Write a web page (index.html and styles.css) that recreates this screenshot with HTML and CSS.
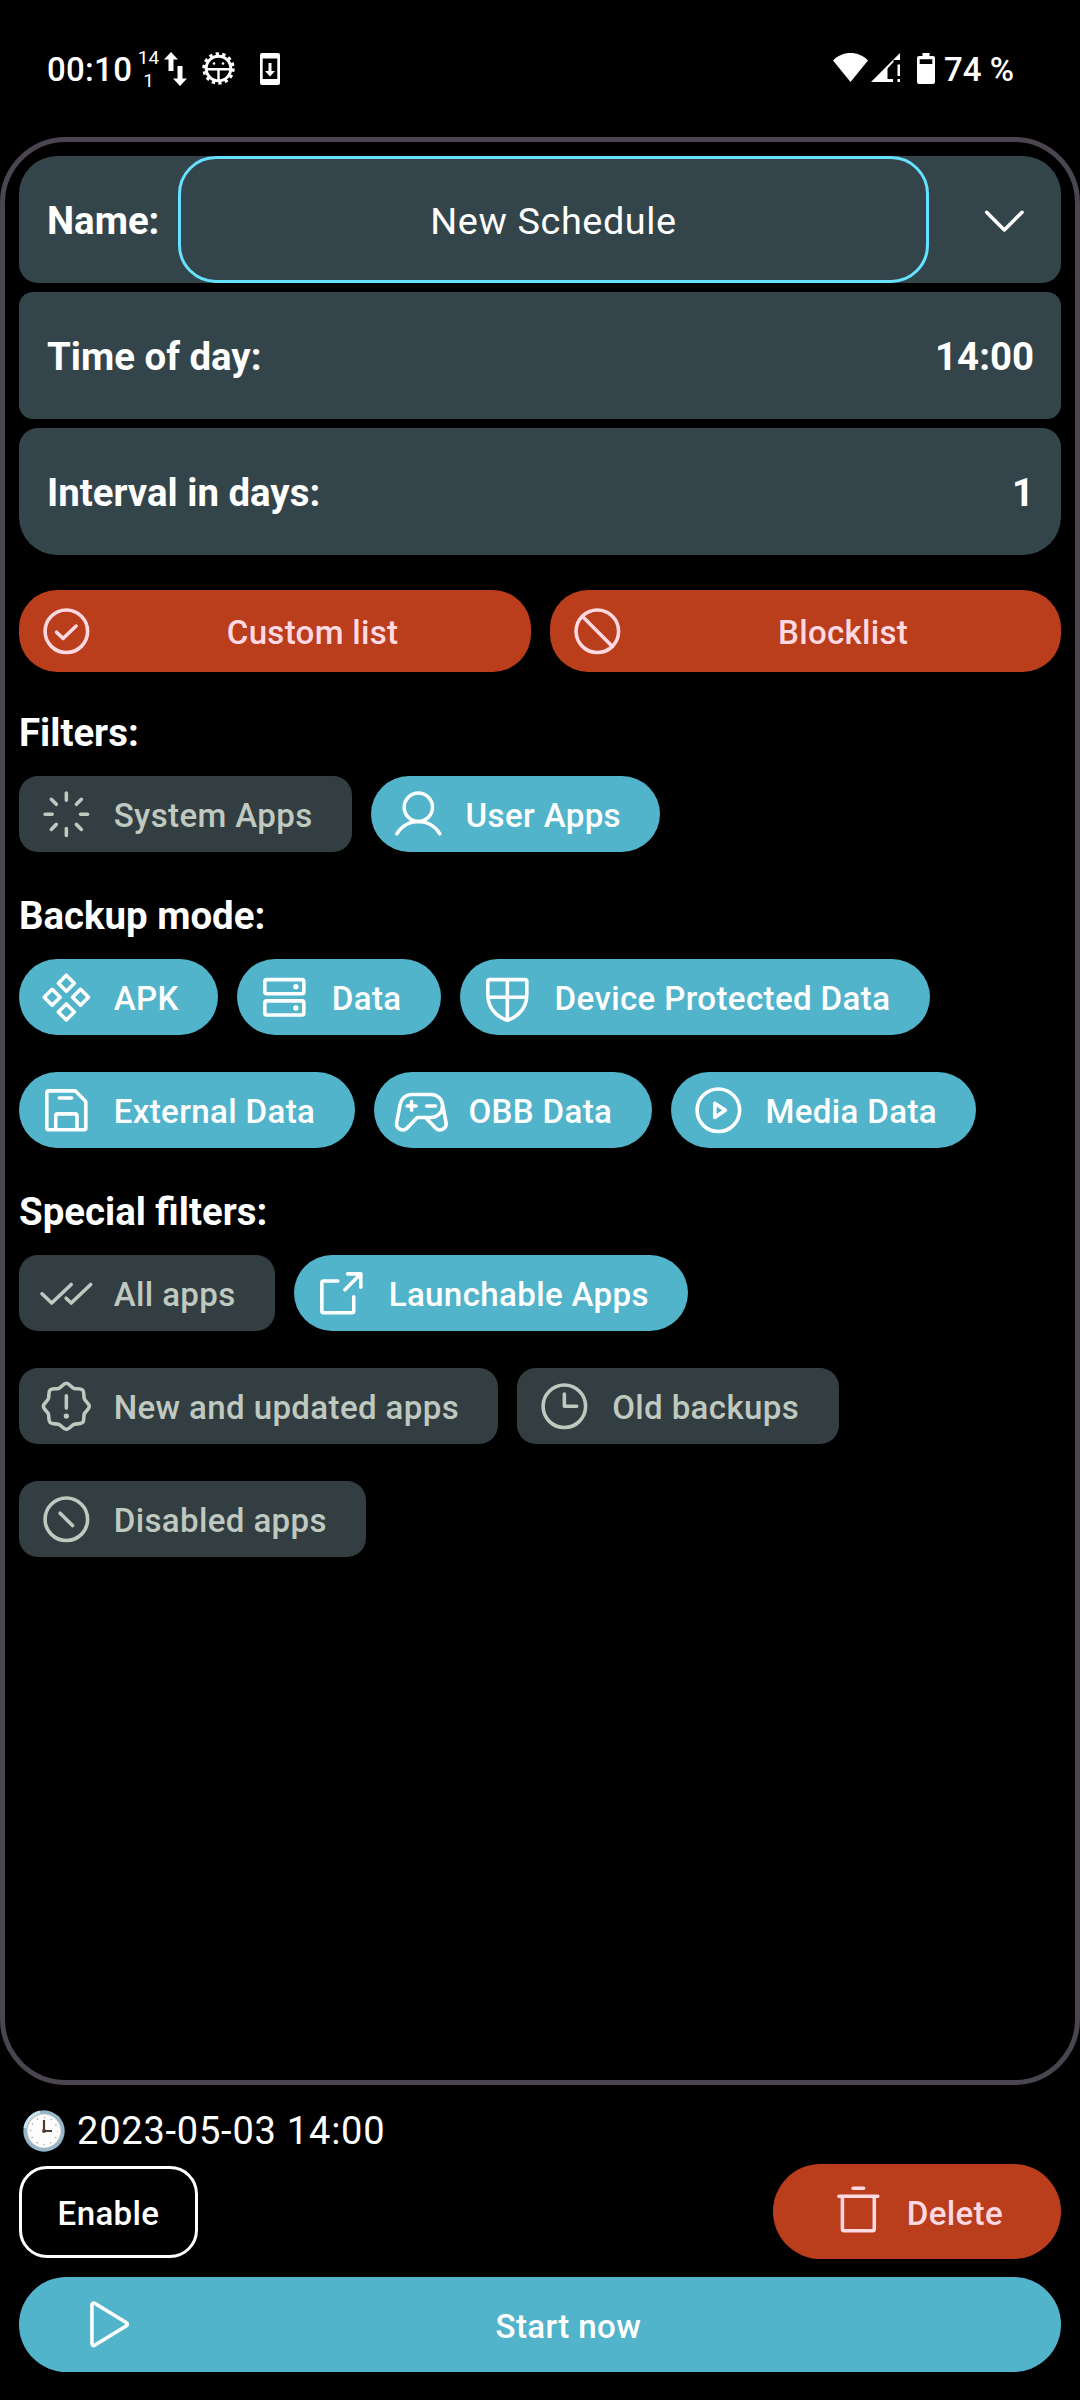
FILE: index.html
```html
<!DOCTYPE html>
<html lang="en">
<head>
<meta charset="utf-8">
<title>Schedule</title>
<link rel="stylesheet" href="styles.css">
</head>
<body>
<div class="screen">
  <header class="status">
    <span class="status-time">00:10</span>
    <span class="status-count"><span>14</span><span>1</span></span>
    <svg class="st-arrows" viewBox="0 0 23 34"><path d="M7 0l7 7.500H9.500V19H4.500V7.500H0zM16 34l-7-7.500h4.500V14h5V26.500H23z"/></svg>
    <svg class="st-cog" viewBox="0 0 33 33"><circle cx="16.500" cy="16.500" r="12.300" fill="none" stroke="#fff" stroke-width="3"/><circle cx="16.500" cy="16.500" r="14.700" fill="none" stroke="#fff" stroke-width="3" stroke-dasharray="3.300 3.300"/><path d="M4 16h25v2.500H4zM15.300 17h2.400v12h-2.400z"/><circle cx="12" cy="11.500" r="1.300"/><circle cx="21" cy="11.500" r="1.300"/></svg>
    <svg class="st-phone" viewBox="0 0 20 32"><path fill-rule="evenodd" d="M2 0H18a2 2 0 0 1 2 2V30a2 2 0 0 1-2 2H2a2 2 0 0 1-2-2V2a2 2 0 0 1 2-2zM2.700 5.500V26H17.300V5.500zM8.500 10h3v8h3.500L10 23.500 5 18h3.500z"/></svg>
    <span class="spacer"></span>
    <svg class="st-wifi" viewBox="0 0 35 29"><path d="M0 7.500C9-2.500 26-2.500 35 7.500L17.500 29z"/></svg>
    <svg class="st-signal" viewBox="0 0 29 29"><path d="M29 0V7H22.500v2L16.500 15.500V26H22v3H0zM26.500 11.500H29V23H26.500zM26.500 26H29v3H26.500z"/></svg>
    <svg class="st-battery" viewBox="0 0 18 31"><path fill-rule="evenodd" d="M5.500 0h7V3H16a2 2 0 0 1 2 2V29a2 2 0 0 1-2 2H2a2 2 0 0 1-2-2V5a2 2 0 0 1 2-2H5.500zM2.700 6.200V11H15.300V6.200z"/></svg>
    <span class="status-pct">74 %</span>
  </header>

  <main class="panel">
    <section class="rows">
      <div class="row row-first">
        <span class="row-label">Name:</span>
        <span class="field">New Schedule</span>
        <span class="expand"><svg class="icon" viewBox="0 0 256 256"><path d="M208 96l-80 80-80-80"/></svg></span>
      </div>
      <div class="row row-mid"><span class="row-label">Time of day:</span><span class="row-value">14:00</span></div>
      <div class="row row-last"><span class="row-label">Interval in days:</span><span class="row-value">1</span></div>
    </section>

    <div class="lists">
      <button class="list-btn"><svg class="icon" viewBox="0 0 256 256"><circle cx="128" cy="128" r="96"/><path d="M172 104l-58.700 56L84 132"/></svg><span>Custom list</span></button>
      <button class="list-btn"><svg class="icon" viewBox="0 0 256 256"><circle cx="128" cy="128" r="96"/><path d="M60 60L196 196"/></svg><span>Blocklist</span></button>
    </div>

    <h2 class="heading heading-first">Filters:</h2>
    <div class="chips">
      <span class="chip"><svg class="icon" viewBox="0 0 256 256"><path d="M128 32v32M195.900 60.100l-22.600 22.600M224 128h-32M195.900 195.900l-22.600-22.600M128 224v-32M60.100 195.900l22.600-22.600M32 128h32M60.100 60.100l22.600 22.600"/></svg>System Apps</span>
      <span class="chip chip-on"><svg class="icon" viewBox="0 0 256 256"><circle cx="128" cy="96" r="64"/><path d="M31 216a112 112 0 0 1 194 0"/></svg>User Apps</span>
    </div>

    <h2 class="heading">Backup mode:</h2>
    <div class="chips">
      <span class="chip chip-on"><svg class="icon" viewBox="0 0 256 256"><path d="M128 28l36 36-36 36-36-36zM128 158l36 36-36 36-36-36zM64 92l36 36-36 36-36-36zM192 92l36 36-36 36-36-36z"/></svg>APK</span>
      <span class="chip chip-on"><svg class="icon" viewBox="0 0 256 256"><rect x="40" y="144" width="176" height="64" rx="8"/><rect x="40" y="48" width="176" height="64" rx="8"/><circle class="dot" cx="180" cy="80" r="12"/><circle class="dot" cx="180" cy="176" r="12"/></svg>Data</span>
      <span class="chip chip-on"><svg class="icon" viewBox="0 0 256 256"><path d="M40 114.700V56a8 8 0 0 1 8-8H208a8 8 0 0 1 8 8v58.700c0 84-71.300 111.800-85.500 116.500a7.200 7.200 0 0 1-5 0C111.300 226.500 40 198.700 40 114.700zM128 48V231M41 128H215"/></svg>Device Protected Data</span>
      <span class="chip chip-on"><svg class="icon" viewBox="0 0 256 256"><path d="M216 91.300V208a8 8 0 0 1-8 8H48a8 8 0 0 1-8-8V48a8 8 0 0 1 8-8H164.700a7.900 7.900 0 0 1 5.600 2.300l43.400 43.400a7.900 7.900 0 0 1 2.300 5.600zM80 216V152a8 8 0 0 1 8-8h80a8 8 0 0 1 8 8v64M152 72H96"/></svg>External Data</span>
      <span class="chip chip-on"><svg class="icon" viewBox="0 0 256 256"><path d="M152 108h40M84 88v40M64 108h40M172 56l-88 .200A52 52 0 0 0 32.900 99L16.500 183.200a28 28 0 0 0 47.400 24.600L109.200 160H172a52 52 0 1 0 0-104zM223.100 99l16.400 84.200a28 28 0 0 1-47.400 24.600L146.800 160"/></svg>OBB Data</span>
      <span class="chip chip-on"><svg class="icon" viewBox="0 0 256 256"><circle cx="128" cy="128" r="96"/><path d="M160 128l-48-32v64z"/></svg>Media Data</span>
    </div>

    <h2 class="heading">Special filters:</h2>
    <div class="chips">
      <span class="chip"><svg class="icon" viewBox="0 0 256 256"><path d="M150 88L62 172 18 130M238 88l-88 84-23-22"/></svg>All apps</span>
      <span class="chip chip-on"><svg class="icon" viewBox="0 0 256 256"><path d="M216 100V40H156M144 112l72-72M184 144v64a8 8 0 0 1-8 8H48a8 8 0 0 1-8-8V80a8 8 0 0 1 8-8h64"/></svg>Launchable Apps</span>
      <span class="chip"><svg class="icon" viewBox="0 0 256 256"><path d="M54.500 201.500c-9.200-9.200-3.100-28.500-7.800-39.800S24 140.500 24 128s17.800-22 22.700-33.700S45.300 63.700 54.500 54.500s28.500-3.100 39.800-7.800S115.500 24 128 24s22 17.800 33.700 22.700 30.600-1.400 39.800 7.800 3.100 28.500 7.800 39.800S232 115.500 232 128s-17.800 22-22.700 33.700 1.400 30.600-7.800 39.800-28.500 3.100-39.800 7.800S140.500 232 128 232s-22-17.800-33.700-22.700-30.600 1.400-39.800-7.800zM128 80v56"/><circle class="dot" cx="128" cy="172" r="12"/></svg>New and updated apps</span>
      <span class="chip"><svg class="icon" viewBox="0 0 256 256"><circle cx="128" cy="128" r="96"/><path d="M128 72v56h56"/></svg>Old backups</span>
      <span class="chip"><svg class="icon" viewBox="0 0 256 256"><circle cx="128" cy="128" r="96"/><path d="M100 100l56 56"/></svg>Disabled apps</span>
    </div>
  </main>

  <footer class="footer">
    <div class="next">
      <svg class="clock" viewBox="0 0 42 42"><circle cx="21" cy="21" r="20.700" fill="#94b6c8"/><path d="M2 18A20 20 0 0 1 17 2" stroke="#c8e2ee" stroke-width="3" fill="none"/><circle cx="21" cy="21" r="17" fill="#e4ddd0"/><circle cx="21" cy="21" r="16.200" fill="#fdfdfd"/><circle cx="21" cy="21" r="13.500" fill="none" stroke="#6e93a5" stroke-width="1.300" stroke-dasharray="1 6.069" stroke-dashoffset=".5"/><path d="M21 10v11h8" fill="none" stroke="#523a30" stroke-width="2.200"/><circle cx="21" cy="21" r="1.900" fill="#523a30"/></svg>
      <span>2023-05-03 14:00</span>
    </div>
    <div class="actions">
      <button class="enable">Enable</button>
      <button class="delete"><svg class="icon" viewBox="0 0 256 256"><path d="M216 60H40M104 24h48M200 60V208a8 8 0 0 1-8 8H64a8 8 0 0 1-8-8V60"/></svg><span>Delete</span></button>
    </div>
    <button class="start"><svg class="icon" viewBox="0 0 256 256"><path d="M72 39.900V216.100a8 8 0 0 0 12.200 6.700L228.200 134.700a7.900 7.900 0 0 0 0-13.400L84.200 33.200A8 8 0 0 0 72 39.900z"/></svg><span>Start now</span></button>
  </footer>
</div>
</body>
</html>
```
FILE: styles.css
```css
* { box-sizing: border-box; }

body {
  margin: 0;
  background: #000;
  color: #fff;
  font-family: Roboto, sans-serif;
}

.screen {
  width: 1080px;
  height: 2400px;
  display: flex;
  flex-direction: column;
  overflow: hidden;
}

button {
  border: 0;
  padding: 0;
  font: inherit;
  color: inherit;
  letter-spacing: inherit;
}

.icon {
  width: 56.7px;
  height: 56.7px;
  flex: none;
  fill: none;
  stroke: currentColor;
  stroke-width: 16;
  stroke-linecap: round;
  stroke-linejoin: round;
}

.icon .dot { fill: currentColor; stroke: none; }

/* Labels sit slightly below centre; icons stay centred */
.chip, .list-btn { padding-top: 2px; }
.chip .icon, .list-btn .icon { margin-top: -2px; }
.delete, .start, .enable { padding-top: 3px; }
.delete .icon, .start .icon { margin-top: -3px; }

/* Status bar */
.status {
  height: 137px;
  padding: 0 66px 0 47px;
  display: flex;
  align-items: center;
  fill: #fff;
  font-size: 33px;
  font-weight: 500;
}

.status svg { flex: none; }
.status-time { width: 88px; padding-top: 2px; letter-spacing: .3px; }
.status-count {
  width: 27px;
  padding-top: 1px;
  display: flex;
  flex-direction: column;
  align-items: center;
  font-size: 19px;
  font-weight: 400;
  line-height: 23px;
}
.st-arrows { width: 23px; height: 34px; margin-left: 2px; }
.st-cog { width: 33px; height: 33px; margin-left: 15px; }
.st-phone { width: 20px; height: 32px; margin-left: 25px; }
.spacer { flex: 1; }
.st-wifi { width: 35px; height: 29px; margin-bottom: 2px; }
.st-signal { width: 29px; height: 29px; margin: 0 0 2px 3px; }
.st-battery { width: 18px; height: 31px; margin-left: 17px; }
.status-pct { margin-left: 9px; padding-top: 2px; }

/* Schedule panel */
.panel {
  height: 1948px;
  padding: 14px;
  border: 5px solid #4a4550;
  border-radius: 66px;
}

.rows { display: flex; flex-direction: column; gap: 9px; }

.row {
  height: 127px;
  padding: 0 27px 0 28px;
  display: flex;
  align-items: center;
  justify-content: space-between;
  background: #33454b;
  border-radius: 14px;
  font-size: 38.4px;
  font-weight: 700;
}

.row-first { padding-right: 0; border-radius: 38px 38px 19px 19px; }
.row-last { border-radius: 19px 19px 38px 38px; }
.row-label, .row-value { padding-top: 2px; }
.row-first .row-label { width: 131px; }

.field {
  width: 751px;
  height: 127px;
  padding-top: 2px;
  display: flex;
  align-items: center;
  justify-content: center;
  border: 3px solid #66e2ff;
  border-radius: 38px;
  font-size: 37.8px;
  font-weight: 400;
  letter-spacing: .6px;
}

.expand { flex: 1; display: flex; justify-content: center; padding-left: 18px; }

.lists { margin-top: 35px; display: flex; gap: 19px; }

.list-btn {
  flex: 1;
  height: 82px;
  padding-left: 19px;
  display: flex;
  align-items: center;
  background: #ba3d1c;
  border-radius: 38px;
  color: #ffd9e2;
  font-size: 33.1px;
  font-weight: 500;
  letter-spacing: .3px;
}
.list-btn span { flex: 1; text-align: center; }

.heading {
  margin: 36px 0 15px;
  font-size: 38.4px;
  font-weight: 700;
  line-height: 56px;
}
.heading-first { margin-top: 33px; }

.chips { display: flex; flex-wrap: wrap; gap: 37px 19px; }

.chip {
  height: 76px;
  padding-left: 19px;
  padding-right: 39.4px;
  display: flex;
  align-items: center;
  gap: 19px;
  background: #323e42;
  border-radius: 19px;
  color: #c0c9c0;
  font-size: 33.1px;
  font-weight: 500;
  letter-spacing: .36px;
  white-space: nowrap;
}

.chip-on {
  background: #51b4ca;
  border-radius: 38px;
  color: #fff;
}

/* Bottom actions */
.footer {
  padding: 17px 19px 0;
  font-size: 33.1px;
  font-weight: 500;
  letter-spacing: .35px;
}

.next {
  height: 57px;
  padding-left: 4px;
  display: flex;
  align-items: center;
  gap: 12px;
  font-size: 38px;
  font-weight: 400;
  letter-spacing: .78px;
}
.clock { width: 42px; height: 42px; }

.actions {
  margin-top: 5px;
  display: flex;
  align-items: center;
  justify-content: space-between;
}

.enable {
  width: 179px;
  height: 92px;
  background: none;
  border: 3px solid #fff;
  border-radius: 28px;
}

.delete {
  width: 288px;
  height: 95px;
  padding-left: 57px;
  display: flex;
  align-items: center;
  gap: 20px;
  background: #ba3d1c;
  border-radius: 48px;
  color: #ffd9e2;
}

.start {
  width: 100%;
  height: 95px;
  margin-top: 18px;
  padding-left: 57px;
  padding-right: 57px;
  display: flex;
  align-items: center;
  background: #51b4ca;
  border-radius: 48px;
}
.start span { flex: 1; text-align: center; }
```
